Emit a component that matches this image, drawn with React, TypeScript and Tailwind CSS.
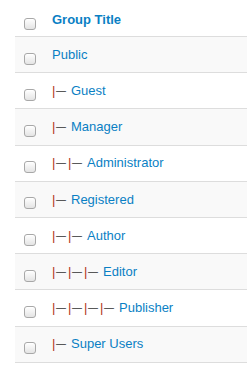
import React from 'react'

interface Group {
  title: string
  level: number
}

const groups: Group[] = [
  { title: 'Public', level: 0 },
  { title: 'Guest', level: 1 },
  { title: 'Manager', level: 1 },
  { title: 'Administrator', level: 2 },
  { title: 'Registered', level: 1 },
  { title: 'Author', level: 2 },
  { title: 'Editor', level: 3 },
  { title: 'Publisher', level: 4 },
  { title: 'Super Users', level: 1 },
]

function Checkbox() {
  return (
    <span className="block w-[12px] h-[12px] rounded-[3px] border border-[#a8a8a8] bg-gradient-to-b from-white to-[#e4e4e4] shadow-[inset_0_1px_0_#fff]" />
  )
}

// Tree prefix: one "|—" per nesting level
function Indent({ level }: { level: number }) {
  if (level === 0) return null
  return (
    <span className="inline-flex items-baseline mr-[3px]">
      {Array.from({ length: level }).map((_, i) => (
        <span key={i} className="inline-flex items-baseline w-[16px]">
          <span className="inline-block w-[4px] text-[#b3301c]">|</span>
          <span className="inline-block w-[12px] text-[10px] text-[#333] relative -top-[1px]">&mdash;</span>
        </span>
      ))}
    </span>
  )
}

export default function App() {
  return (
    <div className="w-[247px] h-[383px] bg-white pl-[15px] text-[13px] font-['Helvetica_Neue','Liberation_Sans',Arial,sans-serif]">
      <div className="flex items-center h-[37px] border-b border-[#ddd]">
        <div className="w-[37px] pl-[9px] pt-[12px]">
          <Checkbox />
        </div>
        <span className="font-bold text-[#0a7fc4] pt-[4px]">Group Title</span>
      </div>
      {groups.map((g, i) => (
        <div
          key={g.title}
          className={`flex items-center h-[36.2px] border-b border-[#ddd] ${i % 2 === 0 ? 'bg-[#f9f9f9]' : 'bg-white'}`}
        >
          <div className="w-[37px] pl-[9px] pt-[8px]">
            <Checkbox />
          </div>
          <span className="whitespace-nowrap">
            <Indent level={g.level} />
            <a className="text-[#0a7fc4]">{g.title}</a>
          </span>
        </div>
      ))}
    </div>
  )
}
